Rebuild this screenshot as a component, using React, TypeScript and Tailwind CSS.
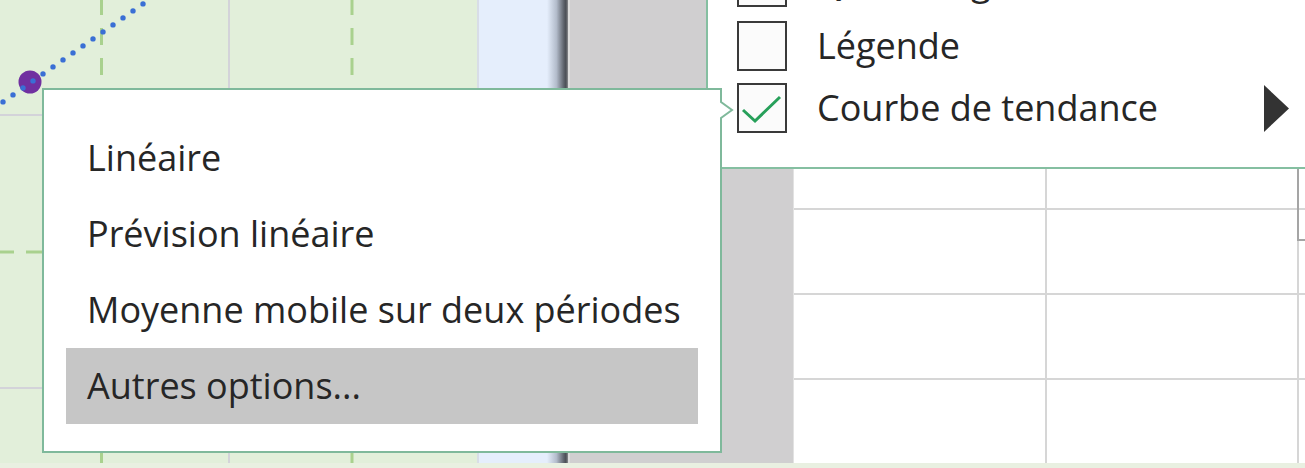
import React from "react";

const menuText = "text-[36px] leading-none text-[#262626] whitespace-nowrap";

const Chart = () => {
  const dots: React.ReactNode[] = [];
  for (let x = 3; 104 - 0.7 * x > -6; x += 10) {
    dots.push(<circle key={x} cx={x} cy={104 - 0.7 * x} r={2.7} fill="#3a6fd5" />);
  }
  return (
    <svg width={477} height={463} className="block shrink-0">
      <rect width={477} height={463} fill="#e2efda" />
      <line x1={0} y1={115} x2={477} y2={115} stroke="#d3d3d9" strokeWidth={2} />
      <line x1={0} y1={388} x2={477} y2={388} stroke="#d3d3d9" strokeWidth={2} />
      <line x1={229} y1={0} x2={229} y2={463} stroke="#d3d3d9" strokeWidth={2} />
      <line x1={0} y1={252} x2={477} y2={252} stroke="#a9d18e" strokeWidth={3} strokeDasharray="16 12" strokeDashoffset={2} />
      <line x1={101.5} y1={0} x2={101.5} y2={463} stroke="#a9d18e" strokeWidth={3} strokeDasharray="17 13" strokeDashoffset={2} />
      <line x1={352} y1={0} x2={352} y2={463} stroke="#a9d18e" strokeWidth={3} strokeDasharray="17 13" strokeDashoffset={2} />
      <circle cx={30} cy={82} r={11.5} fill="#7030a0" />
      {dots}
    </svg>
  );
};

const Sheet = () => (
  <div className="relative flex-1 grid grid-cols-[251px_250px_1fr] grid-rows-[208px_83px_83px_1fr] gap-[2px] bg-[#d6d6d6] border-l border-[#e2e2e2]">
    {Array.from({ length: 12 }).map((_, i) => (
      <div key={i} className="bg-white" />
    ))}
    <div className="absolute left-[503px] top-[120px] w-[10px] h-[121px] border-l-2 border-b-2 border-[#a5a5a5]" />
  </div>
);

const Checkbox = ({ checked }: { checked?: boolean }) => (
  <div className="w-[50px] h-[50px] shrink-0 border-2 border-[#3a3a3a] bg-[#fbfbfb]">
    {checked && (
      <svg width={46} height={46} viewBox="0 0 46 46">
        <path d="M4 25 L16 36 L41 12" fill="none" stroke="#27a05a" strokeWidth={3} />
      </svg>
    )}
  </div>
);

const ParentMenu = () => {
  const items = [
    { label: "Quadrillage", checked: true, arrow: false, h: "h-[67px]" },
    { label: "Légende", checked: false, arrow: false, h: "h-[62px]" },
    { label: "Courbe de tendance", checked: true, arrow: true, h: "h-[62px]" },
  ];
  return (
    <div className="absolute left-[706px] top-0 right-0 h-[169px] overflow-hidden bg-white border-l-2 border-b-2 border-[#85bfa1]">
      <div className="flex flex-col mt-[-52px]">
        {items.map((item) => (
          <div key={item.label} className={`flex items-center ${item.h} pl-[29px]`}>
            <Checkbox checked={item.checked} />
            <span className={`${menuText} ml-[30px]`}>{item.label}</span>
            {item.arrow && (
              <svg width={26} height={47} viewBox="0 0 26 47" className="ml-auto mr-[15px]">
                <path d="M0 0 L25 23.5 L0 47 Z" fill="#333333" />
              </svg>
            )}
          </div>
        ))}
      </div>
    </div>
  );
};

const SubMenu = () => {
  const items = [
    "Linéaire",
    "Prévision linéaire",
    "Moyenne mobile sur deux périodes",
    "Autres options...",
  ];
  return (
    <div className="absolute left-[42px] top-[88px] w-[680px] h-[365px] bg-white border-2 border-[#7fb99b] pt-[30px] px-[22px]">
      {items.map((label, i) => (
        <div
          key={label}
          className={`flex items-center h-[76px] pl-[21px] ${i === 3 ? "bg-[#c6c6c6]" : ""}`}
        >
          <span className={menuText}>{label}</span>
        </div>
      ))}
      <svg width={16} height={20} viewBox="0 0 16 20" className="absolute left-[674px] top-[10px] overflow-visible">
        <rect x={0} y={2} width={4} height={16} fill="white" />
        <path d="M3 0 L3 2 L14 10 L3 18 L3 20" fill="none" stroke="#7fb99b" strokeWidth={2} />
      </svg>
    </div>
  );
};

export default function App() {
  return (
    <div className="relative w-[1305px] h-[468px] overflow-hidden bg-[#e9f0e1] font-['Open_Sans',sans-serif]">
      <div className="flex h-[463px]">
        <Chart />
        <div className="w-[2px] shrink-0 bg-[#d8dde7]" />
        <div className="w-[68px] shrink-0 bg-[#e5eefc]" />
        <div className="w-[21px] shrink-0 bg-[linear-gradient(to_right,#e5eefc,#b3bccb_45%,#5d626b_80%,#4a4e55_90%,#8a8b8e)]" />
        <div className="w-[225px] shrink-0 bg-[#d0cfd0] border-l-2 border-[#dcdcdc]" />
        <Sheet />
      </div>
      <ParentMenu />
      <SubMenu />
    </div>
  );
}
